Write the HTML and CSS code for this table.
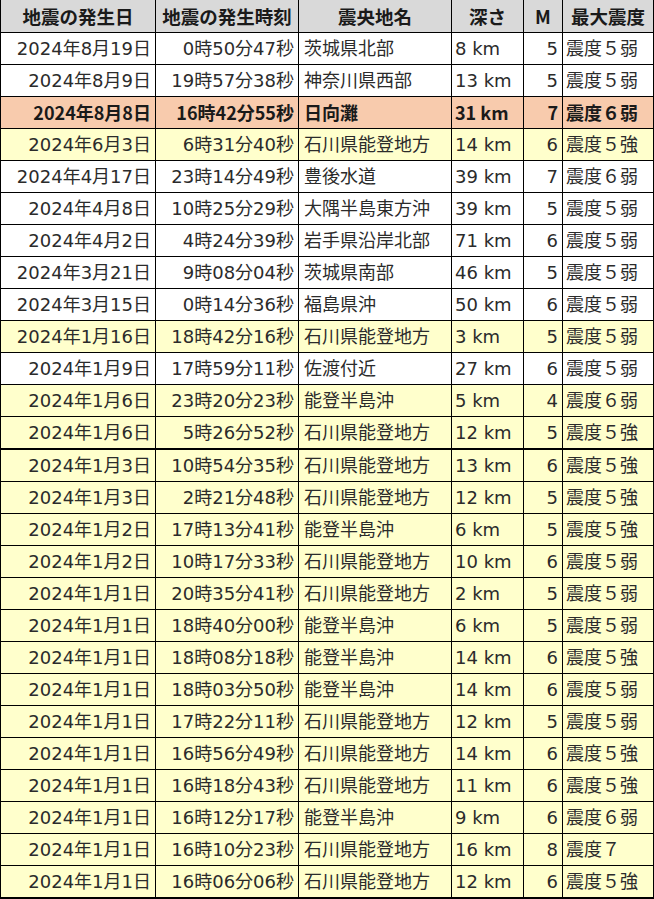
FILE: index.html
```html
<!DOCTYPE html>
<html lang="ja">
<head>
<meta charset="utf-8">
<title>地震一覧</title>
<link rel="stylesheet" href="styles.css">
</head>
<body>
<table class="quakes">
  <thead>
    <tr>
      <th class="c-date">地震の発生日</th>
      <th class="c-time">地震の発生時刻</th>
      <th class="c-place">震央地名</th>
      <th class="c-depth">深さ</th>
      <th class="c-mag">M</th>
      <th class="c-int">最大震度</th>
    </tr>
  </thead>
  <tbody>
    <tr><td class="r">2024年8月19日</td><td class="r">0時50分47秒</td><td class="l">茨城県北部</td><td class="d">8 km</td><td class="r">5</td><td class="s">震度５弱</td></tr>
    <tr><td class="r">2024年8月9日</td><td class="r">19時57分38秒</td><td class="l">神奈川県西部</td><td class="d">13 km</td><td class="r">5</td><td class="s">震度５弱</td></tr>
    <tr class="hot"><td class="r">2024年8月8日</td><td class="r">16時42分55秒</td><td class="l">日向灘</td><td class="d">31 km</td><td class="r">7</td><td class="s">震度６弱</td></tr>
    <tr class="noto"><td class="r">2024年6月3日</td><td class="r">6時31分40秒</td><td class="l">石川県能登地方</td><td class="d">14 km</td><td class="r">6</td><td class="s">震度５強</td></tr>
    <tr><td class="r">2024年4月17日</td><td class="r">23時14分49秒</td><td class="l">豊後水道</td><td class="d">39 km</td><td class="r">7</td><td class="s">震度６弱</td></tr>
    <tr><td class="r">2024年4月8日</td><td class="r">10時25分29秒</td><td class="l">大隅半島東方沖</td><td class="d">39 km</td><td class="r">5</td><td class="s">震度５弱</td></tr>
    <tr><td class="r">2024年4月2日</td><td class="r">4時24分39秒</td><td class="l">岩手県沿岸北部</td><td class="d">71 km</td><td class="r">6</td><td class="s">震度５弱</td></tr>
    <tr><td class="r">2024年3月21日</td><td class="r">9時08分04秒</td><td class="l">茨城県南部</td><td class="d">46 km</td><td class="r">5</td><td class="s">震度５弱</td></tr>
    <tr><td class="r">2024年3月15日</td><td class="r">0時14分36秒</td><td class="l">福島県沖</td><td class="d">50 km</td><td class="r">6</td><td class="s">震度５弱</td></tr>
    <tr class="noto"><td class="r">2024年1月16日</td><td class="r">18時42分16秒</td><td class="l">石川県能登地方</td><td class="d">3 km</td><td class="r">5</td><td class="s">震度５弱</td></tr>
    <tr><td class="r">2024年1月9日</td><td class="r">17時59分11秒</td><td class="l">佐渡付近</td><td class="d">27 km</td><td class="r">6</td><td class="s">震度５弱</td></tr>
    <tr class="noto"><td class="r">2024年1月6日</td><td class="r">23時20分23秒</td><td class="l">能登半島沖</td><td class="d">5 km</td><td class="r">4</td><td class="s">震度６弱</td></tr>
    <tr class="noto split"><td class="r">2024年1月6日</td><td class="r">5時26分52秒</td><td class="l">石川県能登地方</td><td class="d">12 km</td><td class="r">5</td><td class="s">震度５強</td></tr>
    <tr class="noto"><td class="r">2024年1月3日</td><td class="r">10時54分35秒</td><td class="l">石川県能登地方</td><td class="d">13 km</td><td class="r">6</td><td class="s">震度５強</td></tr>
    <tr class="noto"><td class="r">2024年1月3日</td><td class="r">2時21分48秒</td><td class="l">石川県能登地方</td><td class="d">12 km</td><td class="r">5</td><td class="s">震度５強</td></tr>
    <tr class="noto"><td class="r">2024年1月2日</td><td class="r">17時13分41秒</td><td class="l">能登半島沖</td><td class="d">6 km</td><td class="r">5</td><td class="s">震度５強</td></tr>
    <tr class="noto"><td class="r">2024年1月2日</td><td class="r">10時17分33秒</td><td class="l">石川県能登地方</td><td class="d">10 km</td><td class="r">6</td><td class="s">震度５弱</td></tr>
    <tr class="noto"><td class="r">2024年1月1日</td><td class="r">20時35分41秒</td><td class="l">石川県能登地方</td><td class="d">2 km</td><td class="r">5</td><td class="s">震度５弱</td></tr>
    <tr class="noto"><td class="r">2024年1月1日</td><td class="r">18時40分00秒</td><td class="l">能登半島沖</td><td class="d">6 km</td><td class="r">5</td><td class="s">震度５弱</td></tr>
    <tr class="noto"><td class="r">2024年1月1日</td><td class="r">18時08分18秒</td><td class="l">能登半島沖</td><td class="d">14 km</td><td class="r">6</td><td class="s">震度５強</td></tr>
    <tr class="noto"><td class="r">2024年1月1日</td><td class="r">18時03分50秒</td><td class="l">能登半島沖</td><td class="d">14 km</td><td class="r">6</td><td class="s">震度５弱</td></tr>
    <tr class="noto"><td class="r">2024年1月1日</td><td class="r">17時22分11秒</td><td class="l">石川県能登地方</td><td class="d">12 km</td><td class="r">5</td><td class="s">震度５弱</td></tr>
    <tr class="noto"><td class="r">2024年1月1日</td><td class="r">16時56分49秒</td><td class="l">石川県能登地方</td><td class="d">14 km</td><td class="r">6</td><td class="s">震度５強</td></tr>
    <tr class="noto"><td class="r">2024年1月1日</td><td class="r">16時18分43秒</td><td class="l">石川県能登地方</td><td class="d">11 km</td><td class="r">6</td><td class="s">震度５強</td></tr>
    <tr class="noto"><td class="r">2024年1月1日</td><td class="r">16時12分17秒</td><td class="l">能登半島沖</td><td class="d">9 km</td><td class="r">6</td><td class="s">震度６弱</td></tr>
    <tr class="noto"><td class="r">2024年1月1日</td><td class="r">16時10分23秒</td><td class="l">石川県能登地方</td><td class="d">16 km</td><td class="r">8</td><td class="s">震度７</td></tr>
    <tr class="noto last"><td class="r">2024年1月1日</td><td class="r">16時06分06秒</td><td class="l">石川県能登地方</td><td class="d">12 km</td><td class="r">6</td><td class="s">震度５強</td></tr>
  </tbody>
</table>
</body>
</html>
```

FILE: styles.css
```css
html, body {
  margin: 0;
  padding: 0;
  background: #ffffff;
}

.quakes {
  table-layout: fixed;
  width: 654px;
  border-collapse: separate;
  border-spacing: 0;
  font-family: "DejaVu Sans", "Noto Sans CJK JP", sans-serif;
  font-size: 18px;
  color: #2b2b2b;
}

.quakes th,
.quakes td {
  box-sizing: border-box;
  border-right: 1px solid #000;
  border-bottom: 1px solid #000;
  padding: 0;
  line-height: 31px;
  white-space: nowrap;
  overflow: hidden;
}

.quakes th:first-child,
.quakes td:first-child {
  border-left: 1px solid #000;
}

.quakes th {
  background: #d9d9d9;
  font-family: "Noto Sans CJK JP", sans-serif;
  font-weight: bold;
  font-size: 18.5px;
  text-align: center;
  line-height: 32px;
  color: #1a1a1a;
}

.c-date { width: 156px; }
.c-time { width: 143px; }
.c-place { width: 153px; }
.c-depth { width: 72px; }
.c-mag { width: 39px; }
.c-int { width: 91px; }

.quakes td.r { text-align: right; padding-right: 4px; }
.quakes td.l { text-align: left; padding-left: 5px; }
.quakes td.d { text-align: left; padding-left: 3px; }
.quakes td.s { text-align: left; padding-left: 3px; }

.quakes tr.noto td { background: #ffffcc; }

.quakes tr.hot td {
  background: #f8cbad;
  font-family: "Noto Sans CJK JP", sans-serif;
  font-weight: bold;
  color: #1a1a1a;
}

.quakes tr.split td { border-bottom-width: 2px; }
.quakes tr.last td { border-bottom-width: 2px; }
```
